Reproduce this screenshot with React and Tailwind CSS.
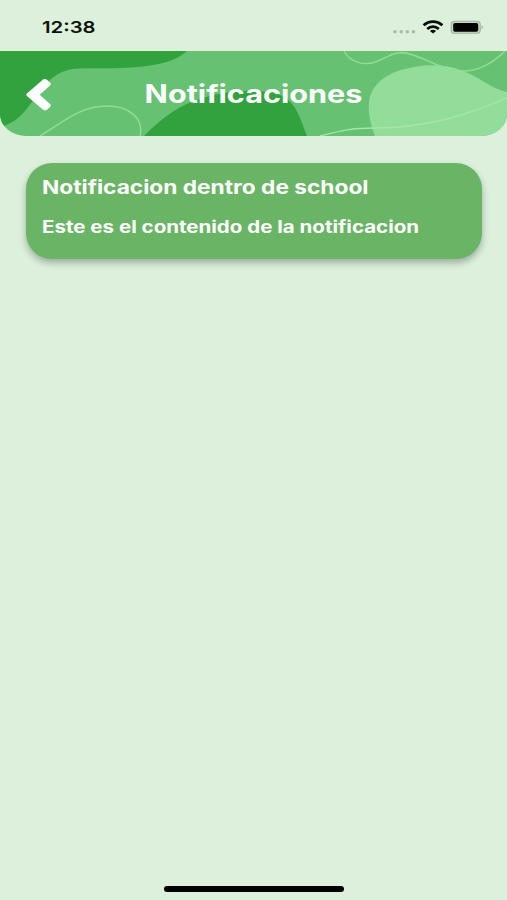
import React from "react";

function StatusBar() {
  return (
    <div className="flex h-[51px] shrink-0 items-start justify-between pl-[42px] pr-[24px] pt-[17px]">
      <span className="origin-left scale-x-[1.23] whitespace-nowrap text-[16.5px] font-semibold leading-[20px] text-[#0b140c]">
        12:38
      </span>
      <svg className="mt-[2px] h-[16px] w-[92px]" viewBox="391 19 92 16">
        <g fill="#a9bba9">
          <circle cx="395" cy="31.8" r="1.8" />
          <circle cx="401.2" cy="31.8" r="1.8" />
          <circle cx="407.3" cy="31.8" r="1.8" />
          <circle cx="413.4" cy="31.8" r="1.8" />
        </g>
        <g fill="none" stroke="#080d08" strokeWidth="2.7">
          <path d="M423.6 25.3C429 20.3 437 20.3 442.4 25.3" />
          <path d="M427.2 29C430.6 25.9 435.4 25.9 438.8 29" />
        </g>
        <path d="M429.9 30.9Q433 28.5 436.1 30.9L433 33.5Z" fill="#080d08" />
        <rect x="451.2" y="21.3" width="29" height="12" rx="3.4" fill="#c3d6c3" stroke="#9fb09f" strokeWidth="1.1" />
        <rect x="453.2" y="23" width="25" height="8.7" rx="1.8" fill="#000" />
        <path d="M481.6 25.2Q483 26 483 27.2T481.6 29.3Z" fill="#9fb09f" />
      </svg>
    </div>
  );
}

function HeaderArt() {
  return (
    <svg className="absolute inset-0 h-full w-full" viewBox="0 51 507 85" preserveAspectRatio="none">
      <rect y="51" width="507" height="85" fill="#66c272" />
      <path d="M0 51H187C176 61 160 65 137 67C113 69 98 68 79 68.5C61 69 52 77 43 87C30 103 23 119 6 125L0 127Z" fill="#31a23e" />
      <path d="M144 136C157 123 174 108 194 101C223 90 254 88 277 94C296 99 301 121 307 136Z" fill="#31a23e" />
      <path d="M375 136C370 123 368 112 369 102C371 85 385 75 401 70C418 65 441 62 463 71C481 78 492 89 507 92V136Z" fill="#93dd9a" />
      <g fill="none" stroke="#93dd95" strokeWidth="1.4">
        <path d="M40 136C61 124 79 106 107 106C130 106 144 119 140 136" />
        <path d="M344 51C350 62 364 67 378 61C388 57 395 50 410 54C430 60 443 71 465 71C483 70 495 61 505 51" />
      </g>
      <path d="M320 136C340 131 350 128 374 128C428 128 470 114 507 98" fill="none" stroke="#a4e6a8" strokeWidth="1.4" />
    </svg>
  );
}

function Header() {
  return (
    <header className="relative h-[85px] shrink-0 overflow-hidden rounded-b-[26px_22px]">
      <HeaderArt />
      <div className="relative grid h-full grid-cols-[80px_1fr_80px] items-center">
        <button aria-label="Volver" className="ml-[26px] mt-[3px] h-[32px] w-[26px]">
          <svg viewBox="26 79 26 32" className="h-full w-full">
            <path
              d="M26.9 93.6L42.8 79.7Q44.9 78.1 46.9 79.8L50 82.4Q51.6 84 50 85.6L39.7 94.8L50 103.9Q51.6 105.5 50 107.1L46.9 109.7Q44.9 111.2 42.8 109.6L26.9 96Q25.7 94.8 26.9 93.6Z"
              fill="#fff"
            />
          </svg>
        </button>
        <h1 className="mt-px scale-x-[1.2] whitespace-nowrap text-center text-[25.5px] font-bold leading-[32px] text-white">
          Notificaciones
        </h1>
      </div>
    </header>
  );
}

function NotificationCard({ title, body }) {
  return (
    <article className="ml-[26px] mr-[25px] mt-[27px] h-[95.5px] rounded-[26px] bg-[#69b565] pl-[16px] pt-[12px] text-white shadow-[0_4px_7px_rgba(0,0,0,0.28)]">
      <h2 className="w-max origin-left scale-x-[1.195] whitespace-nowrap text-[19px] font-bold leading-[26px]">
        {title}
      </h2>
      <p className="mt-[15px] w-max origin-left scale-x-[1.207] whitespace-nowrap text-[17px] font-bold leading-[23px]">
        {body}
      </p>
    </article>
  );
}

export default function App() {
  return (
    <div className="flex h-[900px] w-[507px] flex-col overflow-hidden bg-[#dcf0dc] font-['Inter','Liberation_Sans',sans-serif]">
      <StatusBar />
      <Header />
      <main className="flex-1">
        <NotificationCard title="Notificacion dentro de school" body="Este es el contenido de la notificacion" />
      </main>
      <div className="mb-[8.5px] ml-[164px] h-[5.5px] w-[180px] rounded-full bg-black" />
    </div>
  );
}
